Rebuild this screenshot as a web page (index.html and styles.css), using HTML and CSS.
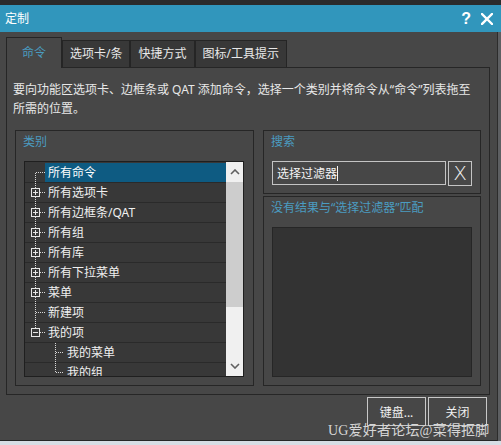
FILE: index.html
```html
<!DOCTYPE html>
<html lang="zh-CN">
<head>
<meta charset="utf-8">
<title>定制</title>
<link rel="stylesheet" href="styles.css">
</head>
<body>
<div class="screen">
  <div class="topstrip"></div>
  <div class="titlebar">
    <span class="title">定制</span>
    <span class="tb-btns">
      <span class="help">?</span>
      <svg class="close" width="12" height="12" viewBox="0 0 12 12"><path d="M1 1 L11 11 M11 1 L1 11" stroke="#fff" stroke-width="2.4" stroke-linecap="square"/></svg>
    </span>
  </div>
  <div class="main">
    <div class="dialog">
      <div class="tabs">
        <div class="tab active">命令</div>
        <div class="tab">选项卡/条</div>
        <div class="tab">快捷方式</div>
        <div class="tab">图标/工具提示</div>
      </div>
      <div class="panel">
        <p class="desc">要向功能区选项卡、边框条或 QAT 添加命令，选择一个类别并将命令从“命令”列表拖至<br>所需的位置。</p>
        <div class="groups">
          <section class="group cat">
            <div class="glabel">类别</div>
            <div class="list">
              <div class="rows">
                <div class="row sel">
                  <svg width="20" height="20"><path d="M10.5 10 V20 M11 9.5 H20" stroke="#d8d8d8" stroke-dasharray="1 1"/></svg>
                  <span class="lbl">所有命令</span>
                </div>
                <div class="row">
                  <svg width="20" height="20"><path d="M10.5 0 V20 M15 9.5 H20" stroke="#d8d8d8" stroke-dasharray="1 1"/><rect x="6.5" y="5.5" width="8" height="8" fill="#383838" stroke="#e6e6e6"/><path d="M8 9.5 H13 M10.5 7 V12" stroke="#e6e6e6"/></svg>
                  <span class="lbl">所有选项卡</span>
                </div>
                <div class="row">
                  <svg width="20" height="20"><path d="M10.5 0 V20 M15 9.5 H20" stroke="#d8d8d8" stroke-dasharray="1 1"/><rect x="6.5" y="5.5" width="8" height="8" fill="#383838" stroke="#e6e6e6"/><path d="M8 9.5 H13 M10.5 7 V12" stroke="#e6e6e6"/></svg>
                  <span class="lbl">所有边框条/QAT</span>
                </div>
                <div class="row">
                  <svg width="20" height="20"><path d="M10.5 0 V20 M15 9.5 H20" stroke="#d8d8d8" stroke-dasharray="1 1"/><rect x="6.5" y="5.5" width="8" height="8" fill="#383838" stroke="#e6e6e6"/><path d="M8 9.5 H13 M10.5 7 V12" stroke="#e6e6e6"/></svg>
                  <span class="lbl">所有组</span>
                </div>
                <div class="row">
                  <svg width="20" height="20"><path d="M10.5 0 V20 M15 9.5 H20" stroke="#d8d8d8" stroke-dasharray="1 1"/><rect x="6.5" y="5.5" width="8" height="8" fill="#383838" stroke="#e6e6e6"/><path d="M8 9.5 H13 M10.5 7 V12" stroke="#e6e6e6"/></svg>
                  <span class="lbl">所有库</span>
                </div>
                <div class="row">
                  <svg width="20" height="20"><path d="M10.5 0 V20 M15 9.5 H20" stroke="#d8d8d8" stroke-dasharray="1 1"/><rect x="6.5" y="5.5" width="8" height="8" fill="#383838" stroke="#e6e6e6"/><path d="M8 9.5 H13 M10.5 7 V12" stroke="#e6e6e6"/></svg>
                  <span class="lbl">所有下拉菜单</span>
                </div>
                <div class="row">
                  <svg width="20" height="20"><path d="M10.5 0 V20 M15 9.5 H20" stroke="#d8d8d8" stroke-dasharray="1 1"/><rect x="6.5" y="5.5" width="8" height="8" fill="#383838" stroke="#e6e6e6"/><path d="M8 9.5 H13 M10.5 7 V12" stroke="#e6e6e6"/></svg>
                  <span class="lbl">菜单</span>
                </div>
                <div class="row">
                  <svg width="20" height="20"><path d="M10.5 0 V20 M11 9.5 H20" stroke="#d8d8d8" stroke-dasharray="1 1"/></svg>
                  <span class="lbl">新建项</span>
                </div>
                <div class="row">
                  <svg width="20" height="20"><path d="M10.5 0 V6 M15 9.5 H20" stroke="#d8d8d8" stroke-dasharray="1 1"/><rect x="6.5" y="5.5" width="8" height="8" fill="#383838" stroke="#e6e6e6"/><path d="M8 9.5 H13" stroke="#e6e6e6"/></svg>
                  <span class="lbl">我的项</span>
                </div>
                <div class="row">
                  <svg width="39" height="20"><path d="M30.5 0 V20 M31 9.5 H39" stroke="#d8d8d8" stroke-dasharray="1 1"/></svg>
                  <span class="lbl">我的菜单</span>
                </div>
                <div class="row">
                  <svg width="39" height="20"><path d="M30.5 0 V10 M31 9.5 H39" stroke="#d8d8d8" stroke-dasharray="1 1"/></svg>
                  <span class="lbl">我的组</span>
                </div>
              </div>
              <div class="vscroll">
                <div class="sbtn"><svg width="10" height="6" viewBox="0 0 10 6"><path d="M1 5 L5 1 L9 5" fill="none" stroke="#606060" stroke-width="1.6"/></svg></div>
                <div class="thumb"></div>
                <div class="track"></div>
                <div class="sbtn"><svg width="10" height="6" viewBox="0 0 10 6"><path d="M1 1 L5 5 L9 1" fill="none" stroke="#606060" stroke-width="1.6"/></svg></div>
              </div>
            </div>
          </section>
          <div class="rightcol">
            <section class="group search">
              <div class="glabel">搜索</div>
              <div class="sline">
                <div class="sinput"><span>选择过滤器</span><span class="caret"></span></div>
                <div class="xbtn">X</div>
              </div>
            </section>
            <section class="group results">
              <div class="glabel">没有结果与“选择过滤器”匹配</div>
              <div class="rbox"></div>
            </section>
          </div>
        </div>
      </div>
      <div class="buttons">
        <button class="btn">键盘...</button>
        <button class="btn">关闭</button>
      </div>
      <div class="watermark">UG爱好者论坛@菜得抠脚</div>
    </div>
    <div class="edge"></div>
  </div>
  <div class="bottomstrip"></div>
</div>
</body>
</html>
```

FILE: styles.css
```css
html, body {
  margin: 0;
  padding: 0;
}
body {
  background: #2b2b2b;
  font-family: "Noto Sans", "Noto Sans CJK SC", sans-serif;
  font-size: 12px;
  color: #e8e8e8;
}
.screen {
  width: 501px;
  height: 445px;
  display: flex;
  flex-direction: column;
  overflow: hidden;
}
.topstrip {
  height: 5px;
  flex: none;
  background: #2b2b2b;
}
.titlebar {
  height: 27px;
  flex: none;
  background: #3196bc;
  display: flex;
  align-items: center;
  justify-content: space-between;
  padding: 0 8px 0 5px;
  color: #fff;
}
.title {
  line-height: 27px;
}
.tb-btns {
  display: flex;
  align-items: center;
  gap: 10px;
}
.help {
  font-family: "Liberation Sans", sans-serif;
  font-weight: bold;
  font-size: 16px;
  line-height: 16px;
}
.close {
  display: block;
}
.main {
  display: flex;
  height: 409px;
  flex: none;
}
.dialog {
  position: relative;
  width: 497px;
  flex: none;
  box-sizing: border-box;
  background: #474747;
  border-bottom: 1px solid #262626;
  padding: 5px 0 0 6px;
}
.edge {
  flex: 1;
  background: #5d5f62;
  border-left: 1px solid #2c2c2c;
}
.bottomstrip {
  height: 4px;
  flex: none;
  background: #d7dde4;
}

/* tabs */
.tabs {
  display: flex;
  align-items: flex-end;
  height: 30px;
  position: relative;
  z-index: 1;
}
.tab {
  height: 27px;
  box-sizing: border-box;
  padding: 0 7px;
  border: 1px solid #252525;
  border-bottom: none;
  background: #383838;
  line-height: 25px;
  color: #e8e8e8;
  white-space: nowrap;
}
.tab.active {
  height: 31px;
  margin-bottom: -1px;
  background: #474747;
  color: #4a9cc0;
  padding: 0 15px;
  line-height: 30px;
}

/* panel */
.panel {
  width: 484px;
  height: 328px;
  box-sizing: border-box;
  border: 1px solid #262626;
  padding: 12px 8px 8px 8px;
}
.desc {
  margin: 0 0 0 -2px;
  line-height: 19px;
  white-space: nowrap;
  color: #e8e8e8;
}
.groups {
  display: flex;
  gap: 9px;
  margin-top: 12px;
  height: 256px;
}
.group {
  box-sizing: border-box;
  border: 1px solid #262626;
  padding: 1px 8px 8px 8px;
  display: flex;
  flex-direction: column;
}
.cat {
  width: 239px;
  flex: none;
  padding-right: 9px;
}
.glabel {
  height: 20px;
  line-height: 20px;
  margin: 0 0 9px -1px;
  color: #4b9cc1;
  white-space: nowrap;
}

/* tree list */
.list {
  flex: 1;
  display: flex;
  border: 1px solid #1f1f1f;
  background: #383838;
  overflow: hidden;
}
.rows {
  flex: 1;
  padding-top: 1px;
  overflow: hidden;
}
.row {
  display: flex;
  height: 20px;
  background: linear-gradient(to top, #2a2a2a 1px, transparent 1px);
}
.row svg {
  flex: none;
  display: block;
}
.lbl {
  flex: 1;
  height: 19px;
  padding-left: 3px;
  line-height: 19px;
  color: #f0f0f0;
  white-space: nowrap;
}
.row.sel .lbl {
  background: #0e5b82;
  color: #ffffff;
}
.vscroll {
  width: 17px;
  flex: none;
  display: flex;
  flex-direction: column;
  background: #f0f0f0;
}
.sbtn {
  height: 20px;
  flex: none;
  display: flex;
  align-items: center;
  justify-content: center;
}
.thumb {
  height: 125px;
  flex: none;
  background: #cdcdcd;
}
.track {
  flex: 1;
}

/* right column */
.rightcol {
  flex: 1;
  display: flex;
  flex-direction: column;
  gap: 2px;
}
.search {
  height: 64px;
  flex: none;
}
.sline {
  display: flex;
  gap: 2px;
}
.sinput {
  flex: 1;
  height: 24px;
  box-sizing: border-box;
  border: 1px solid #c4c4c4;
  padding-left: 4px;
  display: flex;
  align-items: center;
  color: #f4f4f4;
  white-space: nowrap;
}
.caret {
  width: 1px;
  height: 15px;
  background: #f4f4f4;
}
.xbtn {
  width: 24px;
  height: 25px;
  flex: none;
  box-sizing: border-box;
  border: 1px solid #c4c4c4;
  text-align: center;
  font-family: "DejaVu Sans", sans-serif;
  font-weight: 200;
  font-size: 20px;
  line-height: 22px;
  color: #f0f0f0;
}
.results {
  flex: 1;
}
.rbox {
  flex: 1;
  background: #333333;
  border: 1px solid #262626;
}

/* buttons */
.buttons {
  display: flex;
  justify-content: flex-end;
  gap: 2px;
  margin-top: 2px;
  padding-right: 10px;
}
.btn {
  width: 59px;
  height: 29px;
  padding: 0;
  background: transparent;
  border: 1px solid #c8c8c8;
  color: #f0f0f0;
  font-family: inherit;
  font-size: 12px;
}
.watermark {
  position: absolute;
  left: 328px;
  top: 389px;
  line-height: 20px;
  font-family: "Liberation Serif", "Noto Sans CJK SC", serif;
  font-size: 14px;
  letter-spacing: 0.2px;
  color: #d6d6d6;
  white-space: nowrap;
}
```
